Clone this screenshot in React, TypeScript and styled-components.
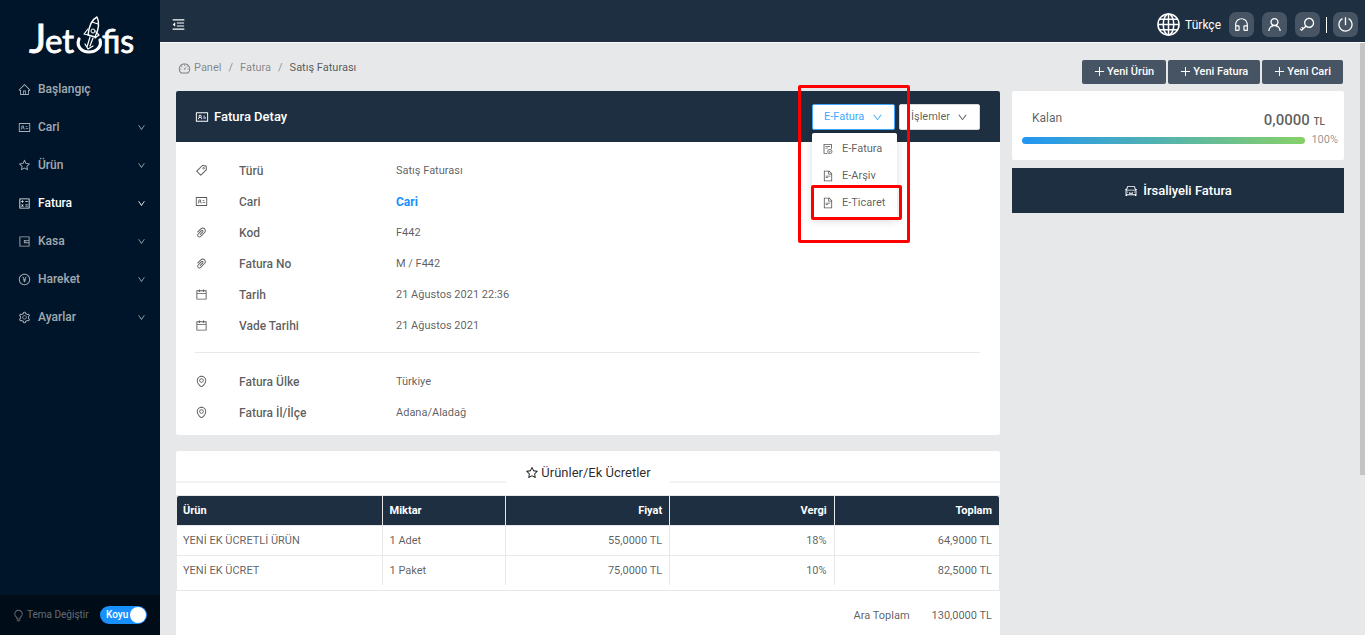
import React from "react";
import styled, { createGlobalStyle, css } from "styled-components";
import {
  AiOutlineHome,
  AiOutlineIdcard,
  AiOutlineStar,
  AiOutlineCalculator,
  AiOutlineWallet,
  AiOutlinePayCircle,
  AiOutlineSetting,
  AiOutlineDown,
  AiOutlineMenuFold,
  AiOutlineDashboard,
  AiOutlineTag,
  AiOutlinePaperClip,
  AiOutlineCalendar,
  AiOutlineEnvironment,
  AiOutlineFileDone,
  AiOutlineFileText,
  AiOutlineBulb,
  AiOutlinePoweroff,
  AiOutlineCar,
  AiOutlinePlus,
  AiOutlineCustomerService,
  AiOutlineUser,
  AiOutlineKey,
} from "react-icons/ai";
import type { IconType } from "react-icons";

const navy = "#1e2f41";
const slate = "#465463";
const blue = "#1890ff";
const text = "rgba(0, 0, 0, 0.65)";
const line = "#e8e8e8";

const GlobalStyle = createGlobalStyle`
  *, *::before, *::after { box-sizing: border-box; }
  body {
    margin: 0;
    background: #e7e8ea;
    color: ${text};
    font-family: Roboto, "Liberation Sans", sans-serif;
    font-size: 11px;
    line-height: 16px;
  }
  button, input { font: inherit; margin: 0; }
  a { color: inherit; text-decoration: none; }
  svg { flex: none; display: block; }
`;

const Shell = styled.div`
  display: flex;
  height: 100vh;
  overflow: hidden;
`;

/* ---------- sidebar ---------- */

const Sidebar = styled.aside`
  display: flex;
  flex-direction: column;
  width: 160px;
  flex: none;
  background: #001529;
  color: rgba(255, 255, 255, 0.65);
`;

const LogoLink = styled.a`
  display: block;
  height: 70px;
  padding-left: 20px;
`;

const Menu = styled.nav`
  display: flex;
  flex-direction: column;
  flex: 1;
`;

const MenuItem = styled.a<{ $active?: boolean }>`
  display: flex;
  align-items: center;
  gap: 7px;
  height: 38px;
  padding: 0 14px 0 18px;
  font-size: 12px;
  font-weight: 500;
  color: ${(p) => (p.$active ? "#fff" : "inherit")};
`;

const MenuLabel = styled.span`
  flex: 1;
`;

const ThemeBar = styled.div`
  display: flex;
  align-items: center;
  height: 40px;
  padding: 0 13px 0 12px;
  background: #000c17;
  color: rgba(255, 255, 255, 0.4);
`;

const ThemeLabel = styled.label`
  flex: 1;
  padding-left: 2px;
  font-size: 10px;
`;

const SwitchWrap = styled.span`
  position: relative;
  display: flex;
`;

const SwitchInput = styled.input`
  appearance: none;
  width: 47px;
  height: 18px;
  border-radius: 9px;
  background: ${blue};
  &::after {
    content: "";
    display: block;
    width: 16px;
    height: 16px;
    margin: 1px 1px 0 auto;
    border-radius: 8px;
    background: #fff;
  }
`;

const SwitchText = styled.span`
  position: absolute;
  left: 6px;
  top: 1px;
  font-size: 10px;
  font-weight: 500;
  color: #fff;
  pointer-events: none;
`;

/* ---------- top bar ---------- */

const Page = styled.div`
  display: flex;
  flex-direction: column;
  flex: 1;
  min-width: 0;
`;

const TopBar = styled.header`
  display: flex;
  align-items: center;
  justify-content: space-between;
  flex: none;
  height: 43px;
  padding: 7px 7px 0 11px;
  border-bottom: 1px solid #fafafa;
  background: ${navy};
  color: #fff;
`;

const PlainButton = styled.button`
  display: flex;
  align-items: center;
  gap: 5px;
  padding: 0;
  border: 0;
  background: none;
  color: #fff;
  font-size: 12px;
`;

const TopActions = styled.div`
  display: flex;
  align-items: center;
  gap: 8px;
`;

const SquareButton = styled.button`
  display: flex;
  align-items: center;
  justify-content: center;
  width: 25px;
  height: 25px;
  padding: 0;
  border: 0;
  border-radius: 7px;
  background: ${slate};
  color: #fff;
`;

const PowerGroup = styled.div`
  display: flex;
  align-items: center;
  gap: 6px;
  margin-left: -2px;
  &::before {
    content: "";
    width: 1px;
    height: 16px;
    background: #fff;
  }
`;

/* ---------- content ---------- */

const Scroller = styled.div`
  display: flex;
  flex: 1;
  min-height: 0;
`;

const Content = styled.main`
  flex: 1;
  min-width: 0;
  padding: 0 16px;
  overflow: hidden;
`;

const ScrollThumb = styled.div`
  width: 5px;
  height: 73%;
  background: #c4c4c4;
`;

const PageHead = styled.div`
  display: flex;
  justify-content: space-between;
  align-items: center;
  height: 48px;
  padding: 2px 1px 0 2px;
`;

const Crumbs = styled.nav`
  display: flex;
  align-items: center;
  gap: 7px;
  color: rgba(0, 0, 0, 0.45);
`;

const Crumb = styled.a<{ $current?: boolean }>`
  display: flex;
  align-items: center;
  gap: 3px;
  color: ${(p) => (p.$current ? text : "inherit")};
`;

const ButtonRow = styled.div`
  display: flex;
  gap: 2px;
  padding-top: 7px;
`;

const NewButton = styled.button`
  display: flex;
  align-items: center;
  gap: 1px;
  height: 24px;
  padding: 0 12px 0 11px;
  border: 0;
  border-radius: 2px;
  background: ${slate};
  color: #fff;
  font-weight: 500;
`;

const Columns = styled.div`
  display: grid;
  grid-template-columns: minmax(0, 1fr) 332px;
  gap: 12px;
  align-items: start;
`;

const Stack = styled.div<{ $gap: number }>`
  display: flex;
  flex-direction: column;
  gap: ${(p) => p.$gap}px;
`;

const Card = styled.section`
  border-radius: 2px;
  background: #fff;
`;

const CardHead = styled.div`
  display: flex;
  align-items: center;
  justify-content: space-between;
  height: 51px;
  padding: 0 20px 0 19px;
  border-radius: 2px 2px 0 0;
  background: ${navy};
  color: #fff;
`;

const CardTitle = styled.h1`
  display: flex;
  align-items: center;
  gap: 5px;
  margin: 0;
  font-size: 13px;
  font-weight: 500;
`;

const HeadActions = styled.div`
  display: flex;
  gap: 4px;
`;

const DropButton = styled.button<{ $open?: boolean }>`
  display: flex;
  align-items: center;
  justify-content: space-between;
  height: 26px;
  width: ${(p) => (p.$open ? 83 : 81)}px;
  padding: 1px 11px 0;
  border: 1px solid ${(p) => (p.$open ? "#40a9ff" : "#d9d9d9")};
  border-radius: 2px;
  background: #fff;
  color: ${(p) => (p.$open ? "#40a9ff" : text)};
`;

const DropWrap = styled.div`
  position: relative;
`;

const DropMenu = styled.ul`
  position: absolute;
  z-index: 2;
  top: 29px;
  left: 0;
  width: 85px;
  margin: 0;
  padding: 3px 0 2px;
  list-style: none;
  border-radius: 2px;
  background: #fff;
  box-shadow: 0 2px 8px rgba(0, 0, 0, 0.15);
`;

const DropItem = styled.a`
  display: flex;
  align-items: center;
  gap: 8px;
  height: 27px;
  padding: 0 10px;
  color: ${text};
`;

const mark = css`
  position: absolute;
  z-index: 3;
  border: 3px solid #f00;
  border-radius: 2px;
  pointer-events: none;
`;

const OuterMark = styled.div`
  ${mark}
  inset: -19px -15px auto -14px;
  height: 158px;
`;

const InnerMark = styled.div`
  ${mark}
  inset: 81px -7px auto -1px;
  height: 35px;
`;

const Details = styled.div`
  padding: 13px 20px 7px 19px;
`;

const DetailRow = styled.div`
  display: grid;
  grid-template-columns: 44px 157px 1fr;
  align-items: center;
  height: 31px;
`;

const DetailLabel = styled.span`
  font-size: 12px;
  font-weight: 500;
`;

const DetailValue = styled.span`
  font-size: 11px;
`;

const DetailLink = styled.a`
  font-size: 12px;
  font-weight: 700;
  color: ${blue};
`;

const Rule = styled.hr`
  height: 1px;
  margin: 11px 0 13px;
  border: 0;
  background: ${line};
`;

const SectionTitle = styled.h2`
  display: flex;
  align-items: flex-end;
  height: 44px;
  margin: 0;
  color: rgba(0, 0, 0, 0.85);
  font-size: 13px;
  font-weight: 400;
  &::before,
  &::after {
    content: "";
    flex: 1;
    height: 2px;
    margin-bottom: 12px;
    background: #f2f2f2;
  }
`;

const SectionLabel = styled.span`
  display: flex;
  align-items: center;
  gap: 2px;
  padding: 0 19px 14px;
`;

const TableFrame = styled.div`
  padding-bottom: 5px;
  border: 1px solid ${line};
`;

const Table = styled.table`
  width: 100%;
  border-collapse: separate;
  border-spacing: 0;
  table-layout: fixed;
`;

const cell = css<{ $end?: boolean }>`
  padding: 0 7px;
  text-align: ${(p) => (p.$end ? "right" : "left")};
  border-right: 1px solid ${line};
  &:first-child {
    padding-left: 6px;
  }
  &:last-child {
    border-right: 0;
  }
`;

const Th = styled.th<{ $end?: boolean }>`
  ${cell}
  height: 29px;
  padding-top: 1px;
  background: ${navy};
  color: #fff;
  font-weight: 700;
  &:first-child {
    border-top-left-radius: 2px;
  }
  &:last-child {
    border-top-right-radius: 2px;
  }
`;

const Td = styled.td<{ $end?: boolean }>`
  ${cell}
  height: 30px;
  border-top: 1px solid ${line};
`;

const Totals = styled.div`
  display: flex;
  justify-content: flex-end;
  gap: 22px;
  padding: 17px 8px 60px;
`;

/* ---------- right column ---------- */

const Balance = styled(Card)`
  height: 69px;
  padding: 19px 6px 0 10px;
`;

const BalanceRow = styled.div`
  display: flex;
  align-items: flex-start;
  justify-content: space-between;
  height: 26px;
  padding: 0 13px 0 10px;
  font-size: 12px;
`;

const Amount = styled.span`
  font-size: 15px;
  font-weight: 500;
  line-height: 20px;
  small {
    font-size: 10px;
  }
`;

const ProgressRow = styled.div`
  display: flex;
  align-items: center;
  gap: 6px;
  height: 8px;
  color: rgba(0, 0, 0, 0.45);
`;

const ProgressBar = styled.div`
  flex: 1;
  height: 7px;
  border-radius: 4px;
  background: linear-gradient(to right, #2196f3, #87d068);
`;

const WideButton = styled.button`
  display: flex;
  align-items: center;
  justify-content: center;
  gap: 5px;
  width: 100%;
  height: 45px;
  border: 0;
  background: ${navy};
  color: #fff;
  font-size: 13px;
  font-weight: 500;
`;

/* ---------- drawings ---------- */

const Logo = () => (
  <svg width="120" height="68" viewBox="20 0 120 68" role="img" aria-label="Jetofis">
    <g fill="#fff" fontFamily="Lato, sans-serif" stroke="#fff" strokeWidth="0.8">
      <text x="29" y="53" fontSize="41">J</text>
      <text x="45" y="53" fontSize="33">et</text>
      <text x="102" y="53" fontSize="32">fis</text>
    </g>
    <g fill="none" stroke="#fff" strokeLinecap="round" strokeLinejoin="round">
      <path d="M79 39C76 47 82 52 89 52C97 52 102 46 100 40" strokeWidth="3.2" />
      <path d="M97 17C91 20 89 26 88 35L95 37C99 29 100 23 97 17Z" strokeWidth="1.4" />
      <path d="M92 22L98 24M88 29L84 34L88 35M96 32L99 35L95 38" strokeWidth="1.2" />
      <circle cx="93" cy="31" r="2" strokeWidth="1" />
      <path d="M90 37L87 47M93 38L90 46M85 44L88 49L93 46" strokeWidth="1.2" />
    </g>
  </svg>
);

const Globe = () => (
  <svg width="23" height="23" viewBox="0 0 24 24" fill="none" stroke="#fff" strokeWidth="1.6" aria-hidden="true">
    <circle cx="12" cy="12" r="11" />
    <ellipse cx="12" cy="12" rx="5.5" ry="11" />
    <path d="M12 1V23M1 12H23M3 6.5H21M3 17.5H21" />
  </svg>
);

/* ---------- data ---------- */

const menu: { label: string; icon: IconType; sub?: boolean; active?: boolean }[] = [
  { label: "Başlangıç", icon: AiOutlineHome },
  { label: "Cari", icon: AiOutlineIdcard, sub: true },
  { label: "Ürün", icon: AiOutlineStar, sub: true },
  { label: "Fatura", icon: AiOutlineCalculator, sub: true, active: true },
  { label: "Kasa", icon: AiOutlineWallet, sub: true },
  { label: "Hareket", icon: AiOutlinePayCircle, sub: true },
  { label: "Ayarlar", icon: AiOutlineSetting, sub: true },
];

type Detail = { icon: IconType; label: string; value: string; link?: boolean };

const details: Detail[] = [
  { icon: AiOutlineTag, label: "Türü", value: "Satış Faturası" },
  { icon: AiOutlineIdcard, label: "Cari", value: "Cari", link: true },
  { icon: AiOutlinePaperClip, label: "Kod", value: "F442" },
  { icon: AiOutlinePaperClip, label: "Fatura No", value: "M / F442" },
  { icon: AiOutlineCalendar, label: "Tarih", value: "21 Ağustos 2021 22:36" },
  { icon: AiOutlineCalendar, label: "Vade Tarihi", value: "21 Ağustos 2021" },
];

const address: Detail[] = [
  { icon: AiOutlineEnvironment, label: "Fatura Ülke", value: "Türkiye" },
  { icon: AiOutlineEnvironment, label: "Fatura İl/İlçe", value: "Adana/Aladağ" },
];

const dropItems: { label: string; icon: IconType }[] = [
  { label: "E-Fatura", icon: AiOutlineFileDone },
  { label: "E-Arşiv", icon: AiOutlineFileText },
  { label: "E-Ticaret", icon: AiOutlineFileText },
];

const columns = [
  { label: "Ürün", width: "25%" },
  { label: "Miktar", width: "15%" },
  { label: "Fiyat", width: "20%", end: true },
  { label: "Vergi", width: "20%", end: true },
  { label: "Toplam", width: "20%", end: true },
];

const rows = [
  ["YENİ EK ÜCRETLİ ÜRÜN", "1 Adet", "55,0000 TL", "18%", "64,9000 TL"],
  ["YENİ EK ÜCRET", "1 Paket", "75,0000 TL", "10%", "82,5000 TL"],
];

const DetailList = ({ items }: { items: Detail[] }) => (
  <>
    {items.map(({ icon: Icon, label, value, link }) => (
      <DetailRow key={label}>
        <Icon size={13} />
        <DetailLabel>{label}</DetailLabel>
        {link ? <DetailLink href="#cari">{value}</DetailLink> : <DetailValue>{value}</DetailValue>}
      </DetailRow>
    ))}
  </>
);

export default function App() {
  return (
    <Shell>
      <GlobalStyle />
      <Sidebar>
        <LogoLink href="#home">
          <Logo />
        </LogoLink>
        <Menu aria-label="Menü">
          {menu.map(({ label, icon: Icon, sub, active }) => (
            <MenuItem key={label} href={`#${label}`} $active={active}>
              <Icon size={13} />
              <MenuLabel>{label}</MenuLabel>
              {sub && <AiOutlineDown size={9} />}
            </MenuItem>
          ))}
        </Menu>
        <ThemeBar>
          <AiOutlineBulb size={13} />
          <ThemeLabel htmlFor="theme">Tema Değiştir</ThemeLabel>
          <SwitchWrap>
            <SwitchInput id="theme" type="checkbox" role="switch" defaultChecked />
            <SwitchText>Koyu</SwitchText>
          </SwitchWrap>
        </ThemeBar>
      </Sidebar>

      <Page>
        <TopBar>
          <PlainButton aria-label="Menüyü daralt">
            <AiOutlineMenuFold size={15} />
          </PlainButton>
          <TopActions>
            <PlainButton>
              <Globe />
              Türkçe
            </PlainButton>
            <SquareButton aria-label="Destek">
              <AiOutlineCustomerService size={17} />
            </SquareButton>
            <SquareButton aria-label="Profil">
              <AiOutlineUser size={17} />
            </SquareButton>
            <SquareButton aria-label="Şifre">
              <AiOutlineKey size={17} />
            </SquareButton>
            <PowerGroup>
              <SquareButton aria-label="Çıkış">
                <AiOutlinePoweroff size={17} />
              </SquareButton>
            </PowerGroup>
          </TopActions>
        </TopBar>

        <Scroller>
          <Content>
            <PageHead>
              <Crumbs aria-label="Konum">
                <Crumb href="#panel">
                  <AiOutlineDashboard size={13} />
                  Panel
                </Crumb>
                <span>/</span>
                <Crumb href="#fatura">Fatura</Crumb>
                <span>/</span>
                <Crumb href="#satis" $current>
                  Satış Faturası
                </Crumb>
              </Crumbs>
              <ButtonRow>
                {["Yeni Ürün", "Yeni Fatura", "Yeni Cari"].map((label) => (
                  <NewButton key={label}>
                    <AiOutlinePlus size={13} />
                    {label}
                  </NewButton>
                ))}
              </ButtonRow>
            </PageHead>

            <Columns>
              <Stack $gap={16}>
                <Card>
                  <CardHead>
                    <CardTitle>
                      <AiOutlineIdcard size={14} />
                      Fatura Detay
                    </CardTitle>
                    <HeadActions>
                      <DropWrap>
                        <DropButton $open aria-expanded="true">
                          E-Fatura
                          <AiOutlineDown size={11} />
                        </DropButton>
                        <DropMenu>
                          {dropItems.map(({ label, icon: Icon }) => (
                            <li key={label}>
                              <DropItem href={`#${label}`}>
                                <Icon size={12} />
                                {label}
                              </DropItem>
                            </li>
                          ))}
                        </DropMenu>
                        <OuterMark />
                        <InnerMark />
                      </DropWrap>
                      <DropButton>
                        İşlemler
                        <AiOutlineDown size={11} />
                      </DropButton>
                    </HeadActions>
                  </CardHead>
                  <Details>
                    <DetailList items={details} />
                    <Rule />
                    <DetailList items={address} />
                  </Details>
                </Card>

                <Card>
                  <SectionTitle>
                    <SectionLabel>
                      <AiOutlineStar size={14} />
                      Ürünler/Ek Ücretler
                    </SectionLabel>
                  </SectionTitle>
                  <TableFrame>
                    <Table>
                      <colgroup>
                        {columns.map((c) => (
                          <col key={c.label} width={c.width} />
                        ))}
                      </colgroup>
                      <thead>
                        <tr>
                          {columns.map((c) => (
                            <Th key={c.label} $end={c.end}>
                              {c.label}
                            </Th>
                          ))}
                        </tr>
                      </thead>
                      <tbody>
                        {rows.map((r) => (
                          <tr key={r[0]}>
                            {r.map((v, i) => (
                              <Td key={i} $end={columns[i].end}>
                                {v}
                              </Td>
                            ))}
                          </tr>
                        ))}
                      </tbody>
                    </Table>
                  </TableFrame>
                  <Totals>
                    <span>Ara Toplam</span>
                    <span>130,0000 TL</span>
                  </Totals>
                </Card>
              </Stack>

              <Stack $gap={8}>
                <Balance>
                  <BalanceRow>
                    <span>Kalan</span>
                    <Amount>
                      0,0000 <small>TL</small>
                    </Amount>
                  </BalanceRow>
                  <ProgressRow>
                    <ProgressBar role="progressbar" aria-label="Kalan" aria-valuenow={100} />
                    100%
                  </ProgressRow>
                </Balance>
                <WideButton>
                  <AiOutlineCar size={14} />
                  İrsaliyeli Fatura
                </WideButton>
              </Stack>
            </Columns>
          </Content>
          <ScrollThumb />
        </Scroller>
      </Page>
    </Shell>
  );
}
